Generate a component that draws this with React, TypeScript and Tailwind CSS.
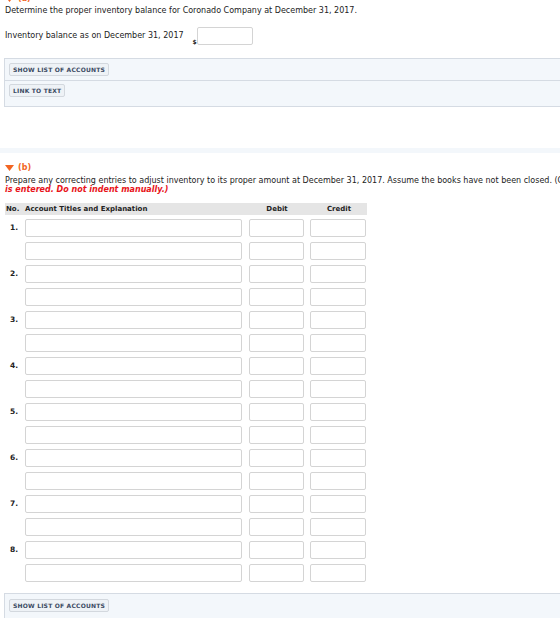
const rows = [1, 2, 3, 4, 5, 6, 7, 8];

function Caret() {
  return (
    <svg width="9" height="6" viewBox="0 0 9 6" className="inline-block">
      <polygon points="0,0 9,0 4.5,6" fill="#f26522" />
    </svg>
  );
}

function Field({ w }: { w: string }) {
  return <div className={`${w} h-[18px] rounded-[2px] border border-[#d4d4d4] bg-white`} />;
}

function ListButton({ label }: { label: string }) {
  return (
    <button className="h-[13px] px-[3px] rounded-[2px] border border-[#d3d8de] bg-[#eef2f6] text-[6px] font-bold text-[#3b4a63] tracking-[0.2px] leading-none">
      {label}
    </button>
  );
}

export default function App() {
  return (
    <div className="w-[560px] h-[618px] overflow-hidden bg-white text-[#222] font-['DejaVu_Sans',Verdana,sans-serif]">
      <div className="px-[5px] -mt-[6px] h-[9px] text-[8px] font-bold text-[#f26522] flex items-center gap-1">
        <Caret />
        <span>(a)</span>
      </div>
      <p className="px-[5px] mt-[3px] text-[8px] leading-[10px]">
        Determine the proper inventory balance for Coronado Company at December 31, 2017.
      </p>
      <div className="flex items-end px-[5px] mt-[11px] h-[18px]">
        <span className="text-[8px] leading-[10px] mb-[4px]">Inventory balance as on December 31, 2017</span>
        <span className="text-[6px] font-bold ml-[9px] leading-none">$</span>
        <Field w="w-[56px]" />
      </div>

      <div className="ml-[4px] mt-[13px] border-t border-l border-b border-[#d5dbe3] bg-[#f3f7fb]">
        <div className="flex px-[4px] pt-[4px] pb-[4px] border-b border-[#d5dbe3]">
          <ListButton label="SHOW LIST OF ACCOUNTS" />
        </div>
        <div className="flex px-[4px] pt-[3px] pb-[9px]">
          <ListButton label="LINK TO TEXT" />
        </div>
      </div>

      <div className="mt-[41px] h-[5px] bg-[#f3f7fb]" />

      <div className="px-[5px] mt-[10px] text-[8px] font-bold text-[#f26522] flex items-center gap-[4px] leading-[9px]">
        <Caret />
        <span>(b)</span>
      </div>
      <p className="px-[5px] mt-[4px] text-[8px] leading-[9px] whitespace-nowrap">
        Prepare any correcting entries to adjust inventory to its proper amount at December 31, 2017. Assume the books have not been closed. (Credit
      </p>
      <p className="px-[5px] text-[8px] leading-[9px] font-bold italic text-[#e8141a]">
        is entered. Do not indent manually.)
      </p>

      <div className="ml-[5px] mt-[9px] w-[362px]">
        <div className="flex items-center h-[12px] bg-[#e5e5e5] text-[7px] font-bold leading-none">
          <span className="w-[20px] pl-[1px]">No.</span>
          <span className="w-[224px]">Account Titles and Explanation</span>
          <span className="w-[56px] text-center">Debit</span>
          <span className="w-[6px]" />
          <span className="w-[56px] text-center">Credit</span>
        </div>
        <div className="flex flex-col gap-[5px] mt-[4px]">
          {rows.map((n) => (
            <div key={n} className="flex flex-col gap-[5px]">
              {[0, 1].map((k) => (
                <div key={k} className="flex items-center">
                  <span className="w-[20px] pl-[5px] text-[7.5px] font-bold leading-none">{k === 0 ? `${n}.` : ""}</span>
                  <Field w="w-[217px]" />
                  <span className="w-[7px]" />
                  <Field w="w-[55px]" />
                  <span className="w-[6px]" />
                  <Field w="w-[56px]" />
                </div>
              ))}
            </div>
          ))}
        </div>
      </div>

      <div className="ml-[4px] mt-[11px] border-t border-l border-[#d5dbe3] bg-[#f3f7fb] h-[40px]">
        <div className="flex px-[4px] pt-[5px]">
          <ListButton label="SHOW LIST OF ACCOUNTS" />
        </div>
      </div>
    </div>
  );
}
